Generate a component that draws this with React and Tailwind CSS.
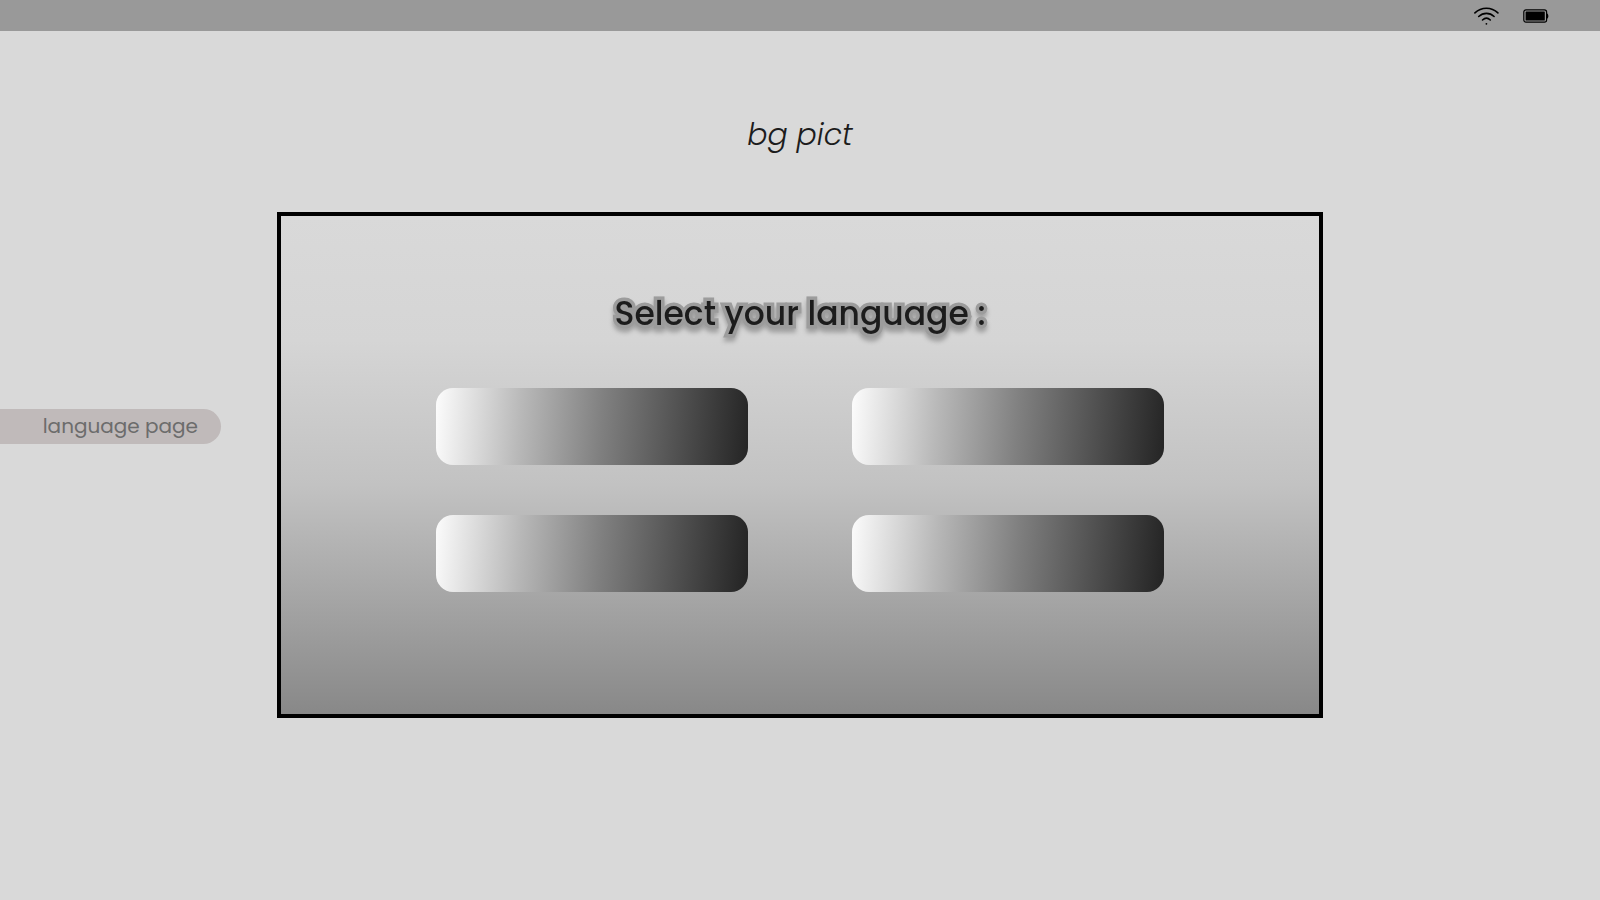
function WifiIcon() {
  return (
    <svg className="h-5 w-[26px]" viewBox="0 0 26 20" fill="none" stroke="#000" strokeWidth="1.6" strokeLinecap="round" role="img" aria-label="Wi-Fi">
      <path d="M1.9 6.9C8.4.6 18.4.6 24.9 6.9" />
      <path d="M5.7 10.5c4.5-4.2 11-4.2 15.4 0" />
      <path d="M9.5 14c2.4-2.2 5.5-2.2 7.8 0" />
      <circle cx="13.4" cy="17.8" r="0.9" fill="#000" stroke="none" />
    </svg>
  );
}

function BatteryIcon() {
  return (
    <svg className="h-[14px] w-[26px]" viewBox="0 0 26 14" fill="none" role="img" aria-label="Battery full">
      <rect x="0.8" y="0.8" width="22.8" height="12.4" rx="2.2" stroke="#000" strokeWidth="1.2" />
      <rect x="2.6" y="2.6" width="19.2" height="8.8" rx="0.5" fill="#000" />
      <path d="M24 4.4c1.8.3 1.8 4.9 0 5.2z" fill="#000" />
    </svg>
  );
}

const languages = ["Language 1", "Language 2", "Language 3", "Language 4"];

export default function App() {
  return (
    <div className="flex min-h-screen flex-col bg-[#d9d9d9] font-['Poppins','Inter',sans-serif] antialiased">
      <header className="flex h-[31px] items-center justify-end gap-6 bg-[#999999] pr-[51px]">
        <WifiIcon />
        <BatteryIcon />
      </header>

      <p className="mt-20 text-center text-[30px] leading-12 font-light italic text-[#1c1c1c]">bg pict</p>

      <main className="mt-[53px] grid grid-cols-[277fr_1046fr_277fr]">
        <div>
          <p className="mt-[197px] mr-14 flex h-[35px] items-center justify-end rounded-r-full bg-[#c0baba] pr-[23px] pb-px text-xl text-[#6c6c6c]">
            language page
          </p>
        </div>

        <section className="border-4 border-black bg-[linear-gradient(180deg,#d9d9d9_0%,#d5d5d5_25%,#c2c2c2_54%,#888888_100%)] px-[155px] pt-[74px] pb-[122px]">
          <h1 className="text-center text-[33px] leading-12 font-medium text-[#1c1c1c] drop-shadow-[0_4px_2px_rgba(0,0,0,0.25)] [-webkit-text-stroke:7px_#9c9c9c] [paint-order:stroke_fill]">
            Select your language :
          </h1>
          <div className="mt-[50px] grid grid-cols-2 gap-x-[104px] gap-y-[50px]">
            {languages.map((name) => (
              <button
                key={name}
                type="button"
                aria-label={name}
                className="h-[77px] rounded-[17px] bg-[linear-gradient(94deg,#ffffff_0%,#b8b8b8_27%,#7c7c7c_53%,#1c1c1c_100%)] opacity-95"
              />
            ))}
          </div>
        </section>
      </main>
    </div>
  );
}
